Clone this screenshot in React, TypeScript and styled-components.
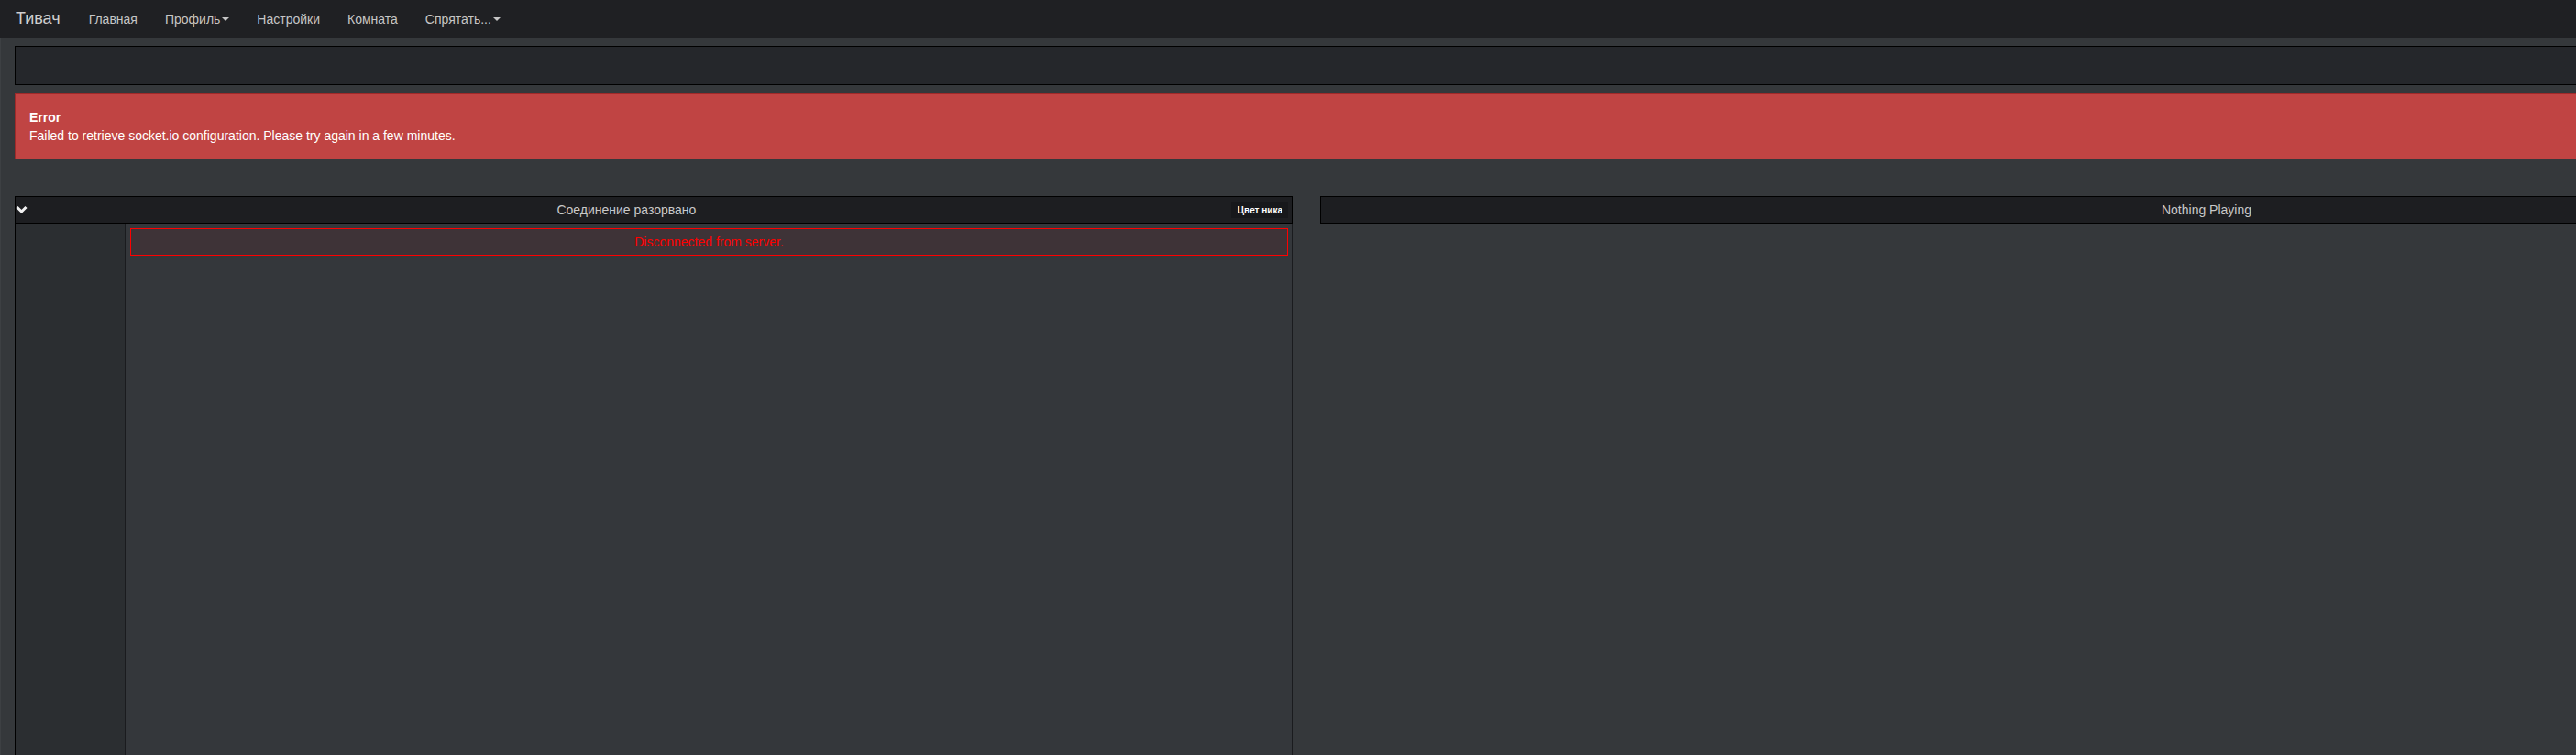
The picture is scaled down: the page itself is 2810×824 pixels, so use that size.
import React from "react";
import styled, { createGlobalStyle } from "styled-components";

const GlobalStyle = createGlobalStyle`
  html, body {
    margin: 0;
    padding: 0;
    overflow: hidden;
    background: #35383b;
    font-family: "Liberation Sans", Arial, sans-serif;
    color: #c8c8c8;
  }
`;

const Navbar = styled.nav`
  display: flex;
  align-items: center;
  height: 41px;
  background: #1f2023;
  border-bottom: 1px solid #000;
  padding-left: 17px;
`;

const Brand = styled.span`
  font-size: 18px;
  color: #cfcfcf;
  margin-right: 16px;
`;

const NavLink = styled.span`
  font-size: 14px;
  color: #c6c6c6;
  padding: 0 15px;
  display: flex;
  align-items: center;
`;

const Caret = styled.span`
  display: inline-block;
  margin-left: 2px;
  width: 0;
  height: 0;
  border-top: 4px solid #c6c6c6;
  border-left: 4px solid transparent;
  border-right: 4px solid transparent;
`;

const Page = styled.main`
  width: 3400px;
  padding: 8px 0 0 15px;
  border-left: 1px solid #3d4043;
`;

const Well = styled.div`
  height: 41px;
  background: #25272b;
  border: 1px solid #000;
`;

const Alert = styled.div`
  margin-top: 9px;
  background: #c04443;
  border: 1px solid #a02a2a;
  padding: 15px 15px;
  color: #fff;
  font-size: 14px;
  line-height: 20px;
`;

const AlertTitle = styled.div`
  font-weight: bold;
`;

const Row = styled.div`
  display: flex;
  gap: 30px;
  margin-top: 40px;
`;

const ChatColumn = styled.section`
  width: 1394px;
  flex: none;
  display: flex;
  flex-direction: column;
`;

const PlayerColumn = styled.section`
  width: 1934px;
  flex: none;
`;

const Header = styled.div`
  display: flex;
  align-items: center;
  height: 28px;
  background: #1d1e21;
  border: 1px solid #000;
  font-size: 14px;
  color: #c9c9c9;
`;

const HeaderTitle = styled.div`
  flex: 1;
  text-align: center;
`;

const Toggle = styled.span`
  display: flex;
  width: 14px;
  margin-right: -7px;
`;

const ColorButton = styled.span`
  background: #17181b;
  color: #fff;
  font-size: 10px;
  font-weight: bold;
  height: 17px;
  line-height: 17px;
  padding: 0 6px 0 7px;
  margin-right: 4px;
`;

const ChatBody = styled.div`
  display: flex;
  height: 600px;
  border-left: 1px solid #000;
  border-right: 1px solid #1a1b1e;
`;

const UserList = styled.div`
  width: 119px;
  background: #2b2e31;
  border-right: 1px solid #1a1b1e;
`;

const MessageBuffer = styled.div`
  flex: 1;
  background: #34373b;
  padding: 5px 4px 0 5px;
`;

const ServerMessage = styled.div`
  height: 28px;
  line-height: 28px;
  background: #3e3337;
  border: 1px solid #f00;
  color: #f00;
  text-align: center;
  font-size: 14px;
`;

function ChevronDown() {
  return (
    <svg width="13" height="10" viewBox="0 0 13 10">
      <path d="M1.5 2 L6.5 7 L11.5 2" fill="none" stroke="#f2f2f2" strokeWidth="3" />
    </svg>
  );
}

export default function App() {
  return (
    <>
      <GlobalStyle />
      <Navbar>
        <Brand>Тивач</Brand>
        <NavLink>Главная</NavLink>
        <NavLink>
          Профиль<Caret />
        </NavLink>
        <NavLink>Настройки</NavLink>
        <NavLink>Комната</NavLink>
        <NavLink>
          Спрятать...<Caret />
        </NavLink>
      </Navbar>
      <Page>
        <Well />
        <Alert>
          <AlertTitle>Error</AlertTitle>
          <div>Failed to retrieve socket.io configuration. Please try again in a few minutes.</div>
        </Alert>
        <Row>
          <ChatColumn>
            <Header>
              <Toggle>
                <ChevronDown />
              </Toggle>
              <HeaderTitle>Соединение разорвано</HeaderTitle>
              <ColorButton>Цвет ника</ColorButton>
            </Header>
            <ChatBody>
              <UserList />
              <MessageBuffer>
                <ServerMessage>Disconnected from server.</ServerMessage>
              </MessageBuffer>
            </ChatBody>
          </ChatColumn>
          <PlayerColumn>
            <Header>
              <HeaderTitle>Nothing Playing</HeaderTitle>
            </Header>
          </PlayerColumn>
        </Row>
      </Page>
    </>
  );
}
